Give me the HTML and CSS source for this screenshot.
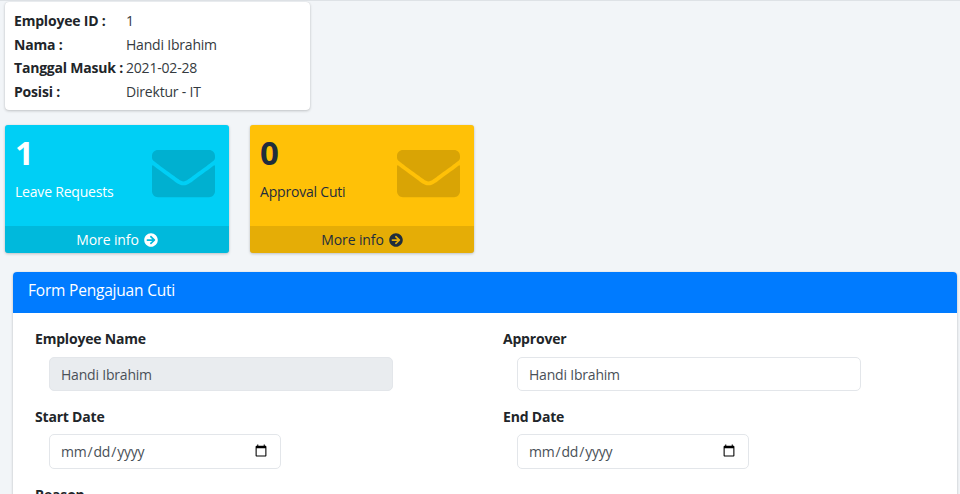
FILE: index.html
```html
<!DOCTYPE html>
<html lang="id">
<head>
<meta charset="utf-8">
<title>Form Pengajuan Cuti</title>
<link rel="stylesheet" href="styles.css">
</head>
<body>
<main class="content">
  <section class="info-card">
    <dl class="info-row"><dt>Employee ID :</dt><dd>1</dd></dl>
    <dl class="info-row"><dt>Nama :</dt><dd>Handi Ibrahim</dd></dl>
    <dl class="info-row"><dt>Tanggal Masuk :</dt><dd>2021-02-28</dd></dl>
    <dl class="info-row"><dt>Posisi :</dt><dd>Direktur - IT</dd></dl>
  </section>

  <section class="boxes">
    <article class="box box-info">
      <div class="box-inner">
        <h3 class="box-num">1</h3>
        <p class="box-label">Leave Requests</p>
      </div>
      <svg class="box-icon" viewBox="0 0 512 512" aria-hidden="true"><path d="M502.3 190.8c3.9-3.1 9.7-.2 9.7 4.7V400c0 26.5-21.5 48-48 48H48c-26.5 0-48-21.5-48-48V195.6c0-5 5.7-7.8 9.7-4.7 22.4 17.4 52.1 39.5 154.1 113.6 21.1 15.4 56.7 47.8 92.2 47.6 35.7.3 72-32.8 92.3-47.6 102-74.1 131.6-96.3 154-113.7zM256 320c23.2.4 56.6-29.2 73.4-41.4 132.7-96.3 142.8-104.7 173.4-128.7 5.8-4.5 9.2-11.5 9.2-18.9v-19c0-26.5-21.5-48-48-48H48C21.5 64 0 85.5 0 112v19c0 7.4 3.4 14.3 9.2 18.9 30.6 23.9 40.7 32.4 173.4 128.7 16.8 12.2 50.2 41.8 73.4 41.4z"/></svg>
      <a class="box-footer" href="#">More info <svg class="arrow" viewBox="0 0 512 512" aria-hidden="true"><path d="M256 8c137 0 248 111 248 248S393 504 256 504 8 393 8 256 119 8 256 8zm-28.9 143.6l75.5 72.4H120c-13.3 0-24 10.7-24 24v16c0 13.3 10.7 24 24 24h182.6l-75.5 72.4c-9.7 9.3-9.9 24.8-.4 34.3l11 10.9c9.4 9.4 24.6 9.4 33.9 0L404.3 273c9.4-9.4 9.4-24.6 0-33.9L271.6 106.3c-9.4-9.4-24.6-9.4-33.9 0l-11 10.9c-9.3 9.6-9.1 25.1.4 34.4z"/></svg></a>
    </article>
    <article class="box box-warning">
      <div class="box-inner">
        <h3 class="box-num">0</h3>
        <p class="box-label">Approval Cuti</p>
      </div>
      <svg class="box-icon" viewBox="0 0 512 512" aria-hidden="true"><path d="M502.3 190.8c3.9-3.1 9.7-.2 9.7 4.7V400c0 26.5-21.5 48-48 48H48c-26.5 0-48-21.5-48-48V195.6c0-5 5.7-7.8 9.7-4.7 22.4 17.4 52.1 39.5 154.1 113.6 21.1 15.4 56.7 47.8 92.2 47.6 35.7.3 72-32.8 92.3-47.6 102-74.1 131.6-96.3 154-113.7zM256 320c23.2.4 56.6-29.2 73.4-41.4 132.7-96.3 142.8-104.7 173.4-128.7 5.8-4.5 9.2-11.5 9.2-18.9v-19c0-26.5-21.5-48-48-48H48C21.5 64 0 85.5 0 112v19c0 7.4 3.4 14.3 9.2 18.9 30.6 23.9 40.7 32.4 173.4 128.7 16.8 12.2 50.2 41.8 73.4 41.4z"/></svg>
      <a class="box-footer" href="#">More info <svg class="arrow" viewBox="0 0 512 512" aria-hidden="true"><path d="M256 8c137 0 248 111 248 248S393 504 256 504 8 393 8 256 119 8 256 8zm-28.9 143.6l75.5 72.4H120c-13.3 0-24 10.7-24 24v16c0 13.3 10.7 24 24 24h182.6l-75.5 72.4c-9.7 9.3-9.9 24.8-.4 34.3l11 10.9c9.4 9.4 24.6 9.4 33.9 0L404.3 273c9.4-9.4 9.4-24.6 0-33.9L271.6 106.3c-9.4-9.4-24.6-9.4-33.9 0l-11 10.9c-9.3 9.6-9.1 25.1.4 34.4z"/></svg></a>
    </article>
  </section>

  <section class="form-card">
    <header class="form-header">Form Pengajuan Cuti</header>
    <form class="form-body">
      <div class="field">
        <label class="field-label" for="emp">Employee Name</label>
        <input class="control control-wide" id="emp" type="text" value="Handi Ibrahim" disabled>
      </div>
      <div class="field">
        <label class="field-label" for="app">Approver</label>
        <input class="control control-wide" id="app" type="text" value="Handi Ibrahim">
      </div>
      <div class="field">
        <label class="field-label" for="start">Start Date</label>
        <input class="control control-date" id="start" type="date">
      </div>
      <div class="field">
        <label class="field-label" for="end">End Date</label>
        <input class="control control-date" id="end" type="date">
      </div>
      <div class="field">
        <label class="field-label" for="reason">Reason</label>
      </div>
    </form>
  </section>
</main>
</body>
</html>
```
FILE: styles.css
```css
* { box-sizing: border-box; }
html, body { margin: 0; height: 494px; overflow: hidden; }
body {
  background: #f2f5f8;
  color: #212529;
  font-family: "Open Sans", "Noto Sans", sans-serif;
  font-size: 14px;
  letter-spacing: -.2px;
  line-height: 21px;
}
.content { border-top: 1px solid #dee2e6; padding-top: 1px; }

.info-card {
  width: 305px;
  height: 108px;
  margin-left: 5px;
  padding: 7px 9px;
  background: #fff;
  border-radius: 4px;
  box-shadow: 0 0 1px rgba(0,0,0,.125), 0 1px 3px rgba(0,0,0,.2);
}
.info-row { display: flex; margin: 0; height: 23.5px; align-items: center; }
.info-row dt { width: 112px; flex: none; font-weight: 700; white-space: nowrap; }
.info-row dd { margin: 0; color: #343a40; }

.boxes { display: flex; gap: 21px; margin: 15px 0 0 5px; }
.box {
  position: relative;
  display: flex;
  flex-direction: column;
  width: 224px;
  height: 128px;
  border-radius: 3px;
  box-shadow: 0 0 1px rgba(0,0,0,.125), 0 1px 3px rgba(0,0,0,.2);
}
.box-info { background: #00cff5; color: #fff; }
.box-warning { background: #ffc107; color: #1f2d3d; }
.box-inner { flex: 1; padding: 8px 10px; }
.box-num { margin: 0 0 8px; font-size: 33px; line-height: 40px; font-weight: 700; }
.box-label { margin: 0; }
.box-icon {
  position: absolute;
  top: 17px;
  right: 14px;
  width: 63px;
  height: 63px;
  fill: rgba(0,0,0,.15);
}
.box-footer {
  display: flex;
  align-items: center;
  justify-content: center;
  gap: 5px;
  height: 27px;
  background: rgba(0,0,0,.1);
  border-radius: 0 0 3px 3px;
  color: inherit;
  letter-spacing: -.1px;
  text-decoration: none;
}
.box-info .box-footer { color: #fff; }
.arrow { width: 14px; height: 14px; fill: currentColor; }

.form-card {
  margin: 19px 3px 0 13px;
  background: #fff;
  border-radius: 4px;
  box-shadow: 0 0 1px rgba(0,0,0,.125), 0 1px 3px rgba(0,0,0,.2);
}
.form-header {
  height: 41px;
  padding: 6px 15px;
  background: #007bff;
  color: #fff;
  font-size: 15.5px;
  line-height: 24px;
  border-radius: 4px 4px 0 0;
}
.form-body {
  display: grid;
  grid-template-columns: 468px 1fr;
  padding: 15px 0 0 22px;
}
.field { padding-bottom: 15px; }
.field-label { display: block; margin-bottom: 7.5px; font-weight: 700; color: #212529; }
.control {
  display: block;
  margin-left: 14px;
  padding: 6px 11px;
  border: 1px solid #e3e6ea;
  border-radius: 5px;
  background: #fff;
  color: #495057;
  font: inherit;
  letter-spacing: inherit;
}
.control:disabled { background: #e9ecef; opacity: 1; color: #495057; }
.control-wide { width: 344px; height: 34px; padding-top: 7px; padding-bottom: 5px; }
.control-date { width: 232px; height: 34.5px; padding-left: 10px; padding-right: 10px; }
```
